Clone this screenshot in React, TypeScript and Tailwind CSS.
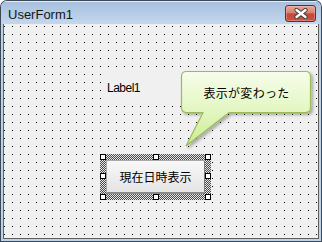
import React from "react";

function CloseX() {
  return (
    <svg width="14" height="11" viewBox="0 0 14 11">
      <path d="M2.5 2 L11.5 9 M11.5 2 L2.5 9" stroke="#3b3b3b" strokeWidth="4.2" strokeLinecap="round" fill="none" />
      <path d="M2.5 2 L11.5 9 M11.5 2 L2.5 9" stroke="#ffffff" strokeWidth="2.4" strokeLinecap="round" fill="none" />
    </svg>
  );
}

function Handle({ className }: { className: string }) {
  return <div className={"absolute w-[6px] h-[6px] border border-black bg-white " + className} />;
}

function Bubble() {
  return (
    <svg className="absolute left-0 top-0 pointer-events-none" width="322" height="242" viewBox="0 0 322 242">
      <defs>
        <linearGradient id="bg" x1="0" y1="71" x2="0" y2="146" gradientUnits="userSpaceOnUse">
          <stop offset="0" stopColor="#f7fdec" />
          <stop offset="0.55" stopColor="#e2f6bf" />
          <stop offset="1" stopColor="#cdea95" />
        </linearGradient>
        <filter id="sh" x="-10%" y="-10%" width="130%" height="140%">
          <feDropShadow dx="2" dy="2" stdDeviation="1.4" floodColor="#000" floodOpacity="0.3" />
        </filter>
      </defs>
      <path
        d="M186.5 71.5 H305.5 Q310.5 71.5 310.5 76.5 V107.5 Q310.5 112.5 305.5 112.5 H229 L186 146 L203 112.5 H186.5 Q181.5 112.5 181.5 107.5 V76.5 Q181.5 71.5 186.5 71.5 Z"
        fill="url(#bg)"
        stroke="#9bbb59"
        strokeWidth="1.2"
        filter="url(#sh)"
      />
    </svg>
  );
}

export default function App() {
  return (
    <div className="w-[322px] h-[242px] bg-white">
      <div className="relative w-[322px] h-[242px] rounded-t-[7px] bg-[#3d4856] p-px">
        <div className="flex flex-col h-full rounded-t-[6px] bg-[#bcd3ec] overflow-hidden">
          <div className="h-[23px] shrink-0 border-t border-t-[#e4edf7] bg-gradient-to-b from-[#a7c0dd] to-[#c3d8ee] pl-[7px] pt-[6px]">
            <span className="block text-[13px] leading-[13px] text-[#151515] font-['Liberation_Sans',sans-serif]">UserForm1</span>
          </div>
          <div className="flex-1 px-[2px] pb-[2px]">
            <div className="h-full border-l border-r border-b border-[#5e5e5e] bg-[#f0f0f0] bg-[conic-gradient(at_1px_1px,#0000_75%,#000_0)] bg-[length:8px_8px] bg-[position:0_2px]" />
          </div>
        </div>

        {/* close button */}
        <div className="absolute left-[285px] top-[5px] w-[31px] h-[17px] rounded-[3px] border border-[#6a2a24] bg-[linear-gradient(#e7a797,#d98170_45%,#c4493a_52%,#c75443)] shadow-[inset_0_0_0_1px_rgba(255,210,200,0.35)] flex items-center justify-center">
          <CloseX />
        </div>

        {/* Label1 */}
        <div className="absolute left-[104px] top-[69px] w-[96px] h-[37px] bg-[#f0f0f0] pl-[3px] pt-[13px]">
          <span className="block text-[12px] leading-[12px] tracking-[-0.5px] text-black font-['Liberation_Sans',sans-serif]">Label1</span>
        </div>

        {/* callout */}
        <Bubble />
        <div className="absolute left-[181px] top-[71px] w-[131px] h-[43px] flex items-center justify-center">
          <span className="text-[12px] leading-[14px] tracking-[0.3px] text-black font-['Noto_Sans_CJK_JP',sans-serif]">表示が変わった</span>
        </div>

        {/* selected command button */}
        <div className="absolute left-[100px] top-[154px] w-[111px] h-[46px] p-[6px] bg-[repeating-conic-gradient(#4a4a4a_0_25%,#e6e6e6_0_50%)] bg-[length:2px_2px]">
          <div className="h-full flex items-center justify-center rounded-[2px] border border-[#a9a9a9] border-r-[#7d7d7d] border-b-2 border-b-[#8a8a8a] bg-gradient-to-b from-[#f8f8f8] to-[#e4e4e4]">
            <span className="text-[12px] leading-[14px] text-black font-['Noto_Sans_CJK_JP',sans-serif]">現在日時表示</span>
          </div>
          <Handle className="left-0 top-0" />
          <Handle className="left-[53px] top-0" />
          <Handle className="right-0 top-0" />
          <Handle className="left-0 top-[19px]" />
          <Handle className="right-0 top-[19px]" />
          <Handle className="left-0 bottom-0" />
          <Handle className="left-[53px] bottom-0" />
          <Handle className="right-0 bottom-0" />
        </div>
      </div>
    </div>
  );
}
